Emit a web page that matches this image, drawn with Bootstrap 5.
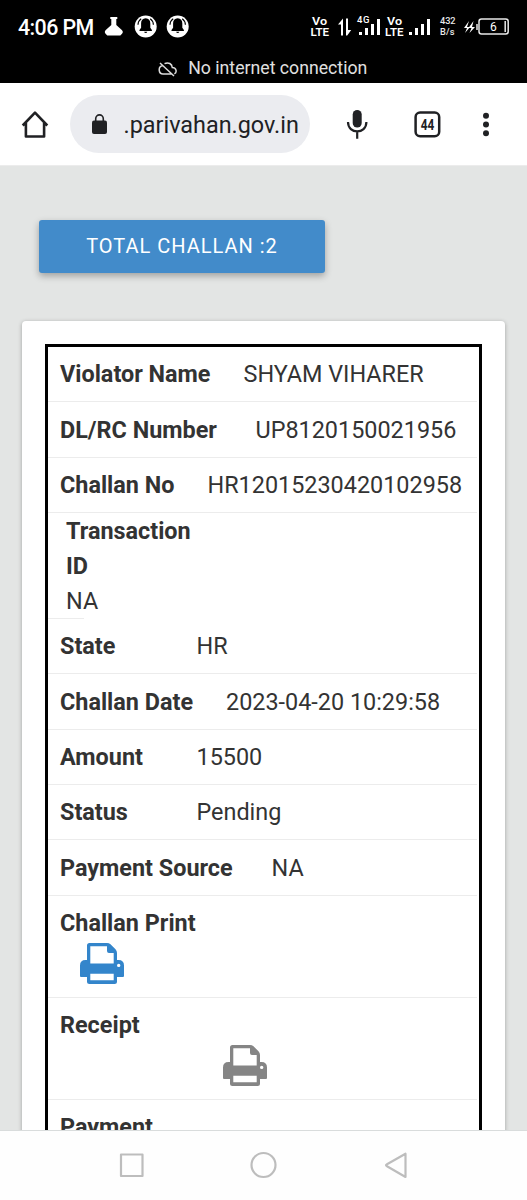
<!DOCTYPE html>
<html lang="en">
<head>
<meta charset="utf-8">
<meta name="viewport" content="width=device-width, initial-scale=1">
<title>Challan</title>
<link href="https://cdn.jsdelivr.net/npm/bootstrap@5.3.0/dist/css/bootstrap.min.css" rel="stylesheet">
<style>
body{font-family:Roboto,"Liberation Sans",sans-serif;color:#333;background:#e3e5e4}
svg{display:block;flex:none}
svg text{font-family:Roboto,sans-serif}
.screen{height:1200px;width:527px}
.status{height:83px;background:#000;color:#fff}
.status-top{height:54px;padding-left:18px}
.clock{font-size:21.4px;letter-spacing:-.6px;font-weight:500;line-height:54px;padding-top:1px;width:86px;white-space:nowrap}
.offline{height:29px;font-size:17.7px;color:#e0e0e0;gap:11.5px;line-height:29px;padding-right:2px}
.toolbar{height:83px;border-bottom:1px solid #ececec}
.address{width:240px;height:58px;background:#ebecf0;color:#202124;font-size:23.4px;padding:2px 0 0 22px;gap:16.5px;line-height:56px;white-space:nowrap}
.page{height:964px;background:#e3e5e4}
.total{width:286px;height:53px;margin:54px 0 0 39px;background:#428bca;color:#fff;font-size:20px;letter-spacing:1px;line-height:20px;border-radius:3px;border:0;box-shadow:0 3px 7px rgba(0,0,0,.3);padding:0 0 1px}
.sheet{width:483px;height:900px;margin:48px 0 0 22px;padding:23px 23px 0;border-radius:4px 4px 0 0;box-shadow:0 1px 4px rgba(0,0,0,.3)}
.records{width:437px;border:3px solid #000;height:900px;padding-right:2px}
.rec{height:55.3px;border-bottom:1px solid #ececec;padding:1.2px 0 0 12px;font-size:23.4px;line-height:35px;white-space:nowrap}
.rec strong,.transaction strong{font-weight:700}
.c-name{width:183.5px}.c-dl{width:195.5px}.c-no{width:147.5px}.c-std{width:136.5px}.c-date{width:166px}.c-src{width:211.5px}
.transaction{height:105.3px;padding:1px 0 0 18px;font-size:23.4px;line-height:35px}
.transaction-line{width:36px;height:1px;background:#ececec;margin-left:0}
.rec.tall{height:102px;padding-top:10.5px}
.print{color:#3385cb;margin:2px 0 0 20px}
.receipt{color:#858585;margin:2px 0 0 162.5px}
.navkeys{height:70px;background:#fefefe;border-top:1px solid #d9dcdc}
</style>
</head>
<body>
<main class="screen d-flex flex-column overflow-hidden">
<header class="status flex-shrink-0">
  <div class="status-top d-flex align-items-center">
    <span class="clock">4:06 PM</span>
    <svg width="86" height="54" viewBox="104 0 86 54" fill="#fff">
      <path d="M110.300 17h7v2h-1v6l5.500 5q2 2 0 4l-1.500 1.500h-13l-1.500-1.500q-2-2 0-4l5.500-5v-6h-1z"/>
      <g id="bell"><circle cx="145.700" cy="26.500" r="11"/><path fill="#000" d="M145.700 18.200c-3 0-4.600 2.200-4.600 5v4.500l-1.600 2.300v.9h12.400v-.9l-1.600-2.300v-4.500c0-2.800-1.600-5-4.600-5zm-1.600 13.500h3.200q-.3 1.300-1.600 1.300t-1.600-1.300z"/><path fill="none" stroke="#000" stroke-width="1.200" d="M141.200 18.700q-3 2-3.200 6M150.200 18.700q3 2 3.200 6"/></g>
      <use href="#bell" x="32"/>
    </svg>
    <svg class="ms-auto" width="221" height="54" viewBox="306 0 221 54" fill="#fff">
      <g font-size="11" font-weight="600"><text x="312" y="25" textLength="15" lengthAdjust="spacingAndGlyphs">Vo</text><text x="310.500" y="35.800" textLength="18.500" lengthAdjust="spacingAndGlyphs">LTE</text><text x="387" y="25" textLength="15" lengthAdjust="spacingAndGlyphs">Vo</text><text x="385" y="35.800" textLength="18.500" lengthAdjust="spacingAndGlyphs">LTE</text></g>
      <path d="M343 18.500v17h-2V24.500h-3zM346 18.500h2V30h3.200l-4 5.500h-1.200z"/>
      <text x="357" y="23" font-size="9.500" font-weight="500" textLength="12.500">4G</text>
      <path d="M359 32h3v3h-3zM365 28h3v7h-3zM371 24h3v11h-3zM377 19h3v16h-3zM409 32h3v3h-3zM415 28h3v7h-3zM421 24h3v11h-3zM427 19h3v16h-3z"/>
      <g font-size="9.200" font-weight="500" fill="#e8e8e8"><text x="440" y="24" textLength="15.500">432</text><text x="440" y="35" textLength="14.500">B/s</text></g>
      <path d="M469 21l-5 7h3l-2 5 5-6h-3zM473.500 21l-5 7h3l-2 5 5.500-6h-3z"/>
      <g fill="none" stroke="#e8e8e8" stroke-width="1.500"><rect x="479" y="19" width="29.200" height="15" rx="2.500"/><path d="M505.200 21v11M477 24v6"/></g>
      <text x="493.300" y="30.700" font-size="12" text-anchor="middle">6</text>
    </svg>
  </div>
  <div class="offline d-flex justify-content-center align-items-center">
    <svg width="19" height="16" viewBox="0 0 19 16" fill="none" stroke="#ddd" stroke-width="1.500"><path d="M2 2l14 13M6.500 2.700C10.500.600 14 3 14.300 6.500c4.500.2 4.800 5.200 2 6.300M4.500 4.800C-.200 5.500.300 13 5 13h8.500"/></svg>
    <span>No internet connection</span>
  </div>
</header>
<nav class="toolbar bg-white d-flex align-items-center flex-shrink-0">
  <svg width="70" height="82" viewBox="0 83 70 82" fill="none" stroke="#202124" stroke-width="2.600"><path d="M22.700 125.500L35 112.700l12.300 12.800M25.900 123v13.500h18.200V123" stroke-linejoin="round"/></svg>
  <div class="address rounded-pill d-flex align-items-center">
    <svg width="15" height="22" viewBox="0 0 15 22"><rect y="6.500" width="15" height="13.500" rx="2" fill="#202124"/><path d="M3.700 7V4.700a3.800 3.800 0 0 1 7.600 0V7" fill="none" stroke="#202124" stroke-width="1.600"/></svg>
    <span>.parivahan.gov.in</span>
  </div>
  <svg width="217" height="82" viewBox="310 83 217 82" fill="#202124">
    <rect x="352.700" y="110" width="9" height="17.500" rx="4.500"/><path d="M348 122c0 12.600 18.400 12.600 18.400 0M357.200 131.500v7.300" fill="none" stroke="#202124" stroke-width="2.200"/>
    <rect x="415.600" y="112.600" width="23.600" height="23.600" rx="4.500" fill="none" stroke="#202124" stroke-width="2.500"/><text x="427.400" y="129.600" font-size="14.500" font-weight="700" text-anchor="middle" textLength="13.500" lengthAdjust="spacingAndGlyphs">44</text>
    <circle cx="486" cy="115.700" r="3"/><circle cx="486" cy="124.500" r="3"/><circle cx="486" cy="133.200" r="3"/>
  </svg>
</nav>
<section class="page overflow-hidden d-flex flex-column align-items-start">
  <button type="button" class="total btn flex-shrink-0">TOTAL CHALLAN :2</button>
  <article class="sheet bg-white flex-shrink-0">
    <div class="records">
      <div class="rec d-flex align-items-center"><strong class="c-name">Violator Name</strong><span>SHYAM VIHARER</span></div>
      <div class="rec d-flex align-items-center"><strong class="c-dl">DL/RC Number</strong><span>UP8120150021956</span></div>
      <div class="rec d-flex align-items-center"><strong class="c-no">Challan No</strong><span>HR12015230420102958</span></div>
      <div class="transaction"><strong>Transaction<br>ID</strong><div>NA</div></div>
      <div class="transaction-line"></div>
      <div class="rec d-flex align-items-center"><strong class="c-std">State</strong><span>HR</span></div>
      <div class="rec d-flex align-items-center"><strong class="c-date">Challan Date</strong><span>2023-04-20 10:29:58</span></div>
      <div class="rec d-flex align-items-center"><strong class="c-std">Amount</strong><span>15500</span></div>
      <div class="rec d-flex align-items-center"><strong class="c-std">Status</strong><span>Pending</span></div>
      <div class="rec d-flex align-items-center"><strong class="c-src">Payment Source</strong><span>NA</span></div>
      <div class="rec tall"><strong class="d-block">Challan Print</strong>
        <svg class="print" width="44" height="41" viewBox="0 0 44 41"><path fill="currentColor" fill-rule="evenodd" d="M9.500 0H27q2 0 3.500 1.300l5 5Q37 8 37 10v7h1.500q5.500 0 5.500 5.500V33q0 1-1 1h-6v4.500q0 2.500-2.500 2.500h-25Q7 41 7 38.500V34H1q-1 0-1-1V22.500Q0 17 5.500 17H7V2.500Q7 0 9.500 0zM10.300 3.300V20.500H33.700V10H29q-2 0-2-2V3.300zM10.300 30.700v6.500h23.400v-6.500zM38.700 20.700a1.700 1.700 0 1 0 0 3.400 1.700 1.700 0 1 0 0-3.400z"/></svg>
      </div>
      <div class="rec tall"><strong class="d-block">Receipt</strong>
        <svg class="receipt" width="44" height="41" viewBox="0 0 44 41"><path fill="currentColor" fill-rule="evenodd" d="M9.500 0H27q2 0 3.500 1.300l5 5Q37 8 37 10v7h1.500q5.500 0 5.500 5.500V33q0 1-1 1h-6v4.500q0 2.500-2.500 2.500h-25Q7 41 7 38.500V34H1q-1 0-1-1V22.500Q0 17 5.500 17H7V2.500Q7 0 9.500 0zM10.300 3.300V20.500H33.700V10H29q-2 0-2-2V3.300zM10.300 30.700v6.500h23.400v-6.500zM38.700 20.700a1.700 1.700 0 1 0 0 3.400 1.700 1.700 0 1 0 0-3.400z"/></svg>
      </div>
      <div class="rec tall border-0"><strong>Payment</strong></div>
    </div>
  </article>
</section>
<footer class="navkeys flex-shrink-0">
  <svg width="527" height="69" viewBox="0 1131 527 69" fill="none" stroke="#bdbdbd" stroke-width="2.200"><path d="M121 1154.500h21.500v21.500H121zM405.500 1153.700v23.300l-18.500-10.800q-2-.8 0-1.900z" stroke-linejoin="round"/><circle cx="263.500" cy="1165" r="12"/></svg>
</footer>
</main>
<script src="https://cdn.jsdelivr.net/npm/bootstrap@5.3.0/dist/js/bootstrap.bundle.min.js"></script>
</body>
</html>
